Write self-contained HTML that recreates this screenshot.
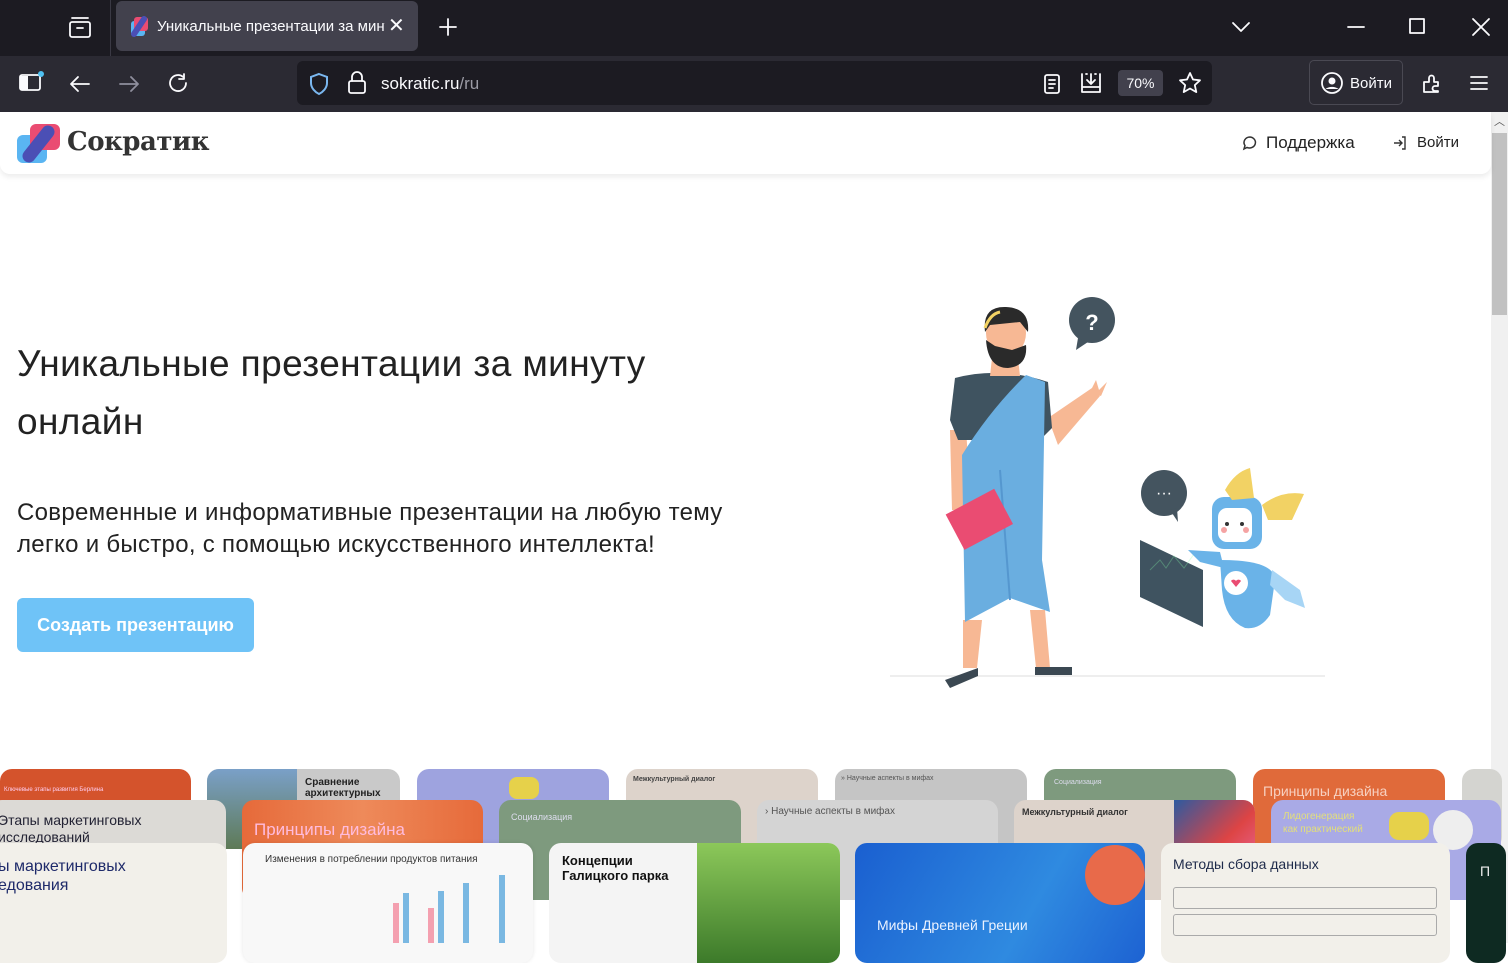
<!DOCTYPE html>
<html><head><meta charset="utf-8"><style>
*{margin:0;padding:0;box-sizing:border-box}
body{width:1508px;height:943px;overflow:hidden;background:#fff;font-family:"Liberation Sans","Noto Sans CJK SC",sans-serif;position:relative}
.a{position:absolute}
.w{color:#fbfbfe}
.card{position:absolute;border-radius:12px;overflow:hidden}
.ic{stroke:#fbfbfe;fill:none;stroke-width:1.8;stroke-linecap:round;stroke-linejoin:round}
</style></head><body>
<!-- tab strip -->
<div class="a" style="left:0;top:0;width:1508px;height:56px;background:#1c1b22"></div>
<div class="a" style="left:110px;top:0;width:1px;height:56px;background:#3a3944"></div>
<svg class="a" style="left:66px;top:14px" width="28" height="26"><rect class="ic" x="4" y="8" width="20" height="15" rx="2"/><path class="ic" d="M6 4h16M11 14h6"/></svg>
<div class="a" style="left:116px;top:1px;width:302px;height:50px;background:#42414d;border-radius:6px"></div>
<svg class="a" style="left:127px;top:15px" width="24" height="24"><rect x="4" y="6" width="14" height="15" rx="3" fill="#5ab5f2"/><rect x="7" y="2" width="14" height="14" rx="3" fill="#ea4c72"/><path d="M7 19L17 4" stroke="#4b4fb5" stroke-width="6" stroke-linecap="round"/></svg>
<div class="a w" style="left:157px;top:18px;font-size:15px;width:228px;white-space:nowrap;overflow:hidden">Уникальные презентации за минуту</div>
<div class="a w" style="left:388px;top:13px;font-size:20px">✕</div>
<svg class="a" style="left:436px;top:15px" width="24" height="24"><path class="ic" d="M12 4v16M4 12h16"/></svg>
<svg class="a" style="left:1229px;top:15px" width="24" height="24"><path class="ic" d="M4 8l8 8 8-8"/></svg>
<svg class="a" style="left:1344px;top:15px" width="24" height="24"><path class="ic" d="M4 12h16"/></svg>
<svg class="a" style="left:1405px;top:14px" width="24" height="24"><rect class="ic" x="5" y="5" width="14" height="14"/></svg>
<svg class="a" style="left:1469px;top:15px" width="24" height="24"><path class="ic" d="M4 4l16 16M20 4L4 20"/></svg>
<!-- toolbar -->
<div class="a" style="left:0;top:56px;width:1508px;height:56px;background:#2b2a33"></div>
<svg class="a" style="left:16px;top:68px" width="32" height="30"><rect class="ic" x="4" y="7" width="20" height="15" rx="2" stroke-width="2.2"/><path d="M4 8h8v14H4z" fill="#fbfbfe"/><circle cx="25" cy="6" r="3" fill="#4fc1f2"/></svg>
<svg class="a" style="left:67px;top:71px" width="26" height="26"><path class="ic" d="M22 13H4M11 6l-7 7 7 7"/></svg>
<svg class="a" style="left:116px;top:71px" width="26" height="26"><path class="ic" style="stroke:#8f8f9d" d="M4 13h18M15 6l7 7-7 7"/></svg>
<svg class="a" style="left:166px;top:71px" width="26" height="26"><path class="ic" d="M20 12a8 8 0 1 1-3-6.2M18 3v5h-5"/></svg>
<div class="a" style="left:297px;top:61px;width:915px;height:44px;background:#1c1b22;border-radius:6px"></div>
<svg class="a" style="left:306px;top:71px" width="26" height="26"><path d="M13 3l8 3v6c0 5-4 9-8 11-4-2-8-6-8-11V6z" fill="none" stroke="#7ab7ef" stroke-width="2"/></svg>
<svg class="a" style="left:345px;top:70px" width="24" height="26"><rect class="ic" x="4" y="11" width="16" height="12" rx="2"/><path class="ic" d="M7 11V7a5 5 0 0 1 10 0v4"/></svg>
<div class="a" style="left:381px;top:74px;font-size:17px;color:#fbfbfe">sokratic.ru<span style="color:#9b9ba5">/ru</span></div>
<svg class="a" style="left:1040px;top:71px" width="24" height="26"><rect class="ic" x="5" y="4" width="14" height="18" rx="2"/><path class="ic" d="M9 9h6M9 13h6M9 17h4"/></svg>
<svg class="a" style="left:1078px;top:70px" width="26" height="26"><path class="ic" d="M4 4v18h18V4M9 4h-1M18 4h-1M13 4v10M9 10l4 4 4-4M4 17h18"/></svg>
<div class="a" style="left:1118px;top:70px;width:45px;height:26px;background:#42414d;border-radius:4px;color:#fbfbfe;font-size:14px;text-align:center;line-height:26px">70%</div>
<svg class="a" style="left:1177px;top:70px" width="26" height="26"><path class="ic" d="M13 3l3 6.5 7 .8-5.2 4.8 1.5 7-6.3-3.6-6.3 3.6 1.5-7L3 10.3l7-.8z"/></svg>
<div class="a" style="left:1309px;top:60px;width:94px;height:45px;border:1px solid #4a4953;border-radius:5px"></div>
<svg class="a" style="left:1319px;top:70px" width="26" height="26"><circle class="ic" cx="13" cy="13" r="10" stroke-width="2"/><circle cx="13" cy="11" r="3.5" fill="#fbfbfe"/><path d="M6.5 19a8 5 0 0 1 13 0" fill="#fbfbfe"/></svg>
<div class="a w" style="left:1350px;top:75px;font-size:15px">Войти</div>
<svg class="a" style="left:1418px;top:70px" width="26" height="26"><path class="ic" d="M6 22V12h5V8a2.5 2.5 0 0 1 5 0v4h4v4h-3a2.5 2.5 0 0 0 0 5h3v1z"/></svg>
<svg class="a" style="left:1467px;top:71px" width="24" height="24"><path class="ic" d="M4 6h16M4 12h16M4 18h16"/></svg>
<!-- scrollbar -->
<div class="a" style="left:1491px;top:112px;width:17px;height:831px;background:#f0f0f0"></div>
<div class="a" style="left:1492px;top:133px;width:15px;height:182px;background:#c1c1c1"></div>
<div class="a" style="left:1494px;top:113px;font-size:11px;color:#555">︿</div>
<div class="a" style="left:1494px;top:924px;font-size:11px;color:#555">﹀</div>
<!-- header -->
<div class="a" style="left:0;top:112px;width:1491px;height:62px;background:#fff;box-shadow:0 3px 6px rgba(0,0,0,.08);border-radius:0 0 10px 10px"></div>
<svg class="a" style="left:16px;top:123px" width="46" height="42"><rect x="1" y="12" width="30" height="28" rx="6" fill="#5ab5f2"/><rect x="14" y="1" width="30" height="26" rx="6" fill="#ea4c72"/><path d="M13 33L32 9" stroke="#4b4fb5" stroke-width="13" stroke-linecap="round"/></svg>
<div class="a" style="left:67px;top:127px;font-family:'DejaVu Serif',serif;font-weight:bold;font-size:26px;color:#333;letter-spacing:-0.5px">Сократик</div>
<svg class="a" style="left:1242px;top:135px" width="16" height="16"><path d="M8 2a6 5.5 0 1 1-3 10.5L2 14l1-3.5A6 5.5 0 0 1 8 2z" fill="none" stroke="#333" stroke-width="1.5"/></svg>
<div class="a" style="left:1266px;top:133px;font-size:17px;color:#222">Поддержка</div>
<svg class="a" style="left:1392px;top:135px" width="16" height="16"><path d="M2 8h8M7 5l3 3-3 3M10 2h3v12h-3" fill="none" stroke="#333" stroke-width="1.4"/></svg>
<div class="a" style="left:1417px;top:134px;font-size:15px;color:#222">Войти</div>
<!-- hero -->
<div class="a" style="left:17px;top:335px;font-size:37px;line-height:58px;color:#222;width:700px;letter-spacing:0.4px">Уникальные презентации за минуту онлайн</div>
<div class="a" style="left:17px;top:497px;font-size:24px;line-height:32px;color:#222;width:760px;letter-spacing:0.3px">Современные и информативные презентации на любую тему легко и быстро, с помощью искусственного интеллекта!</div>
<div class="a" style="left:17px;top:598px;width:237px;height:54px;background:#6fc3f7;border-radius:6px;color:#fff;font-size:18px;font-weight:bold;text-align:center;line-height:54px">Создать презентацию</div>
<!-- illustration -->
<svg class="a" style="left:0;top:0" width="1491" height="760">
<line x1="890" y1="676" x2="1325" y2="676" stroke="#eee" stroke-width="2"/>
<circle cx="1092" cy="320" r="23" fill="#44545f"/><path d="M1078 338l-2 12 12-8z" fill="#44545f"/>
<text x="1092" y="330" font-size="22" font-weight="bold" fill="#fff" text-anchor="middle" font-family="Liberation Sans">?</text>
<circle cx="1164" cy="493" r="23" fill="#44545f"/><path d="M1170 510l8 12-1-14z" fill="#44545f"/>
<text x="1164" y="498" font-size="16" fill="#fff" text-anchor="middle" font-family="Liberation Sans">···</text>
<!-- man -->
<path d="M1048 418 L1092 388 L1100 396 L1058 445z" fill="#f7b894"/>
<path d="M1090 392l6-12 3 10 8-8-6 14z" fill="#f7b894"/>
<path d="M950 430 L952 510 L972 512 L966 430z" fill="#f7b894"/>
<path d="M963 620 L963 668 L977 668 L982 620z M1030 610 L1036 668 L1050 668 L1045 610z" fill="#f7b894"/>
<path d="M945 680 L978 668 L978 676 L950 688z M1035 667 L1072 667 L1072 675 L1035 675z" fill="#3b4852"/>
<path d="M955 378 Q1000 366 1048 382 L1052 428 L1040 440 L958 440 L950 420z" fill="#3f5360"/>
<path d="M1026 375 L1045 382 L1042 560 L1050 612 L1010 598 L965 622 L962 455 Q990 410 1026 375z" fill="#6aaee0"/>
<path d="M1000 470 L1010 600" stroke="#5597cf" stroke-width="2"/>
<path d="M992 358 L1018 358 L1020 376 L990 376z" fill="#f7b894"/>
<ellipse cx="1006" cy="333" rx="20" ry="24" fill="#f7b894"/>
<path d="M985 332 Q982 306 1006 307 Q1030 308 1028 332 L1020 322 L990 325z" fill="#2a2a2a"/>
<path d="M986 340 Q988 368 1008 368 Q1028 366 1026 345 L1012 350 L995 346z" fill="#2a2a2a"/>
<path d="M985 328 Q990 314 1000 312" stroke="#f2d264" stroke-width="3" fill="none"/>
<g transform="rotate(-28 978 520)"><rect x="952" y="500" width="55" height="40" fill="#ea4c72"/></g>
<!-- robot -->
<path d="M1140 540 L1203 570 L1203 627 L1140 597z" fill="#3f5360"/>
<path d="M1150 570 l10 -10 6 8 8 -12 10 12 10 -14" stroke="#8fa" stroke-opacity=".3" fill="none"/>
<path d="M1220 560 Q1275 560 1275 580 L1270 615 Q1260 630 1245 628 Q1225 620 1222 590z" fill="#6ab3e8"/>
<circle cx="1236" cy="583" r="12" fill="#fff"/><path d="M1231 581a3 3 0 0 1 5 0 3 3 0 0 1 5 0l-5 6z" fill="#ea4c72"/>
<path d="M1272 570 L1300 590 L1305 608 L1285 600 L1270 585z" fill="#a7d5f5"/>
<path d="M1188 550 L1220 552 L1224 568 L1200 562z" fill="#6ab3e8"/>
<rect x="1212" y="497" width="50" height="52" rx="12" fill="#6ab3e8"/>
<rect x="1218" y="508" width="34" height="34" rx="9" fill="#fff"/>
<circle cx="1224" cy="530" r="3" fill="#f5a3a3"/><circle cx="1246" cy="530" r="3" fill="#f5a3a3"/>
<circle cx="1227" cy="524" r="2" fill="#333"/><circle cx="1242" cy="524" r="2" fill="#333"/>
<path d="M1225 490 Q1235 472 1250 468 L1254 498 L1232 500z M1262 505 Q1282 490 1304 494 L1292 520 L1268 520z" fill="#f2d264"/>
</svg>
<!-- cards row1 -->
<div class="card" style="left:0;top:769px;width:191px;height:80px;background:#d4532c"><div style="color:#fce;font-size:6px;padding:18px 4px">Ключевые этапы развития Берлина</div></div>
<div class="card" style="left:207px;top:769px;width:193px;height:80px;background:#c9c9c9"><div style="position:absolute;left:0;top:0;width:90px;height:80px;background:linear-gradient(#7aa0c8,#5e7a56)"></div><div style="position:absolute;left:98px;top:8px;font-size:10px;font-weight:bold;color:#222;line-height:11px">Сравнение<br>архитектурных</div></div>
<div class="card" style="left:417px;top:769px;width:192px;height:80px;background:#9ea3df"><div style="position:absolute;left:92px;top:8px;width:30px;height:22px;background:#e6d14a;border-radius:8px"></div></div>
<div class="card" style="left:626px;top:769px;width:192px;height:80px;background:#ddd3cb"><div style="font-size:7px;font-weight:bold;padding:7px;color:#444">Межкультурный диалог</div></div>
<div class="card" style="left:835px;top:769px;width:192px;height:80px;background:#c5c5c5"><div style="font-size:7px;padding:6px;color:#555">» Научные аспекты в мифах</div></div>
<div class="card" style="left:1044px;top:769px;width:192px;height:80px;background:#7e9a7e"><div style="font-size:7px;padding:10px;color:#dde">Социализация</div></div>
<div class="card" style="left:1253px;top:769px;width:192px;height:80px;background:#e06a3a"><div style="font-size:14px;padding:14px 10px;color:#f7d0c0">Принципы дизайна</div></div>
<div class="card" style="left:1462px;top:769px;width:40px;height:80px;background:#d4d4d0"></div>
<!-- row2 -->
<div class="card" style="left:-10px;top:800px;width:236px;height:100px;background:#dcdad6"><div style="font-size:14px;color:#223;padding:12px 8px;line-height:17px">Этапы маркетинговых исследований</div></div>
<div class="card" style="left:242px;top:800px;width:241px;height:100px;background:linear-gradient(90deg,#e66a3a,#ee8a5a,#e66a3a)"><div style="font-size:17px;color:#fbd;padding:20px 12px">Принципы дизайна</div></div>
<div class="card" style="left:499px;top:800px;width:242px;height:100px;background:#7e9a7e"><div style="font-size:9px;color:#dde;padding:12px 12px">Социализация</div></div>
<div class="card" style="left:757px;top:800px;width:241px;height:100px;background:#d4d4d4"><div style="font-size:10px;color:#555;padding:6px 8px">› Научные аспекты в мифах</div></div>
<div class="card" style="left:1014px;top:800px;width:241px;height:100px;background:#ddd3cb"><div style="font-size:9px;font-weight:bold;color:#333;padding:7px 8px">Межкультурный диалог</div><div style="position:absolute;left:160px;top:0;width:81px;height:100px;background:linear-gradient(135deg,#2d5aa0,#d44,#e7b)"></div></div>
<div class="card" style="left:1271px;top:800px;width:230px;height:100px;background:#a9aae6"><div style="font-size:10px;color:#e3df7a;padding:10px 12px;line-height:13px">Лидогенерация<br>как практический</div><div style="position:absolute;left:118px;top:12px;width:40px;height:28px;background:#e6d14a;border-radius:10px"></div><div style="position:absolute;left:162px;top:10px;width:40px;height:40px;background:#eee;border-radius:50%"></div></div>
<!-- row3 -->
<div class="card" style="left:-60px;top:843px;width:287px;height:120px;background:#f2f0ea"><div style="font-size:16px;color:#1e2a6a;padding:14px 58px;line-height:19px">ы маркетинговых<br>едования</div></div>
<div class="card" style="left:243px;top:843px;width:290px;height:120px;background:#f8f8f8;box-shadow:0 0 4px rgba(0,0,0,.1)"><div style="font-size:10px;color:#333;padding:11px 22px">Изменения в потреблении продуктов питания</div>
<div style="position:absolute;left:150px;top:60px;width:6px;height:40px;background:#f4a0b0"></div><div style="position:absolute;left:160px;top:50px;width:6px;height:50px;background:#7ab8e2"></div><div style="position:absolute;left:185px;top:65px;width:6px;height:35px;background:#f4a0b0"></div><div style="position:absolute;left:195px;top:48px;width:6px;height:52px;background:#7ab8e2"></div><div style="position:absolute;left:220px;top:40px;width:6px;height:60px;background:#7ab8e2"></div><div style="position:absolute;left:256px;top:32px;width:6px;height:68px;background:#7ab8e2"></div></div>
<div class="card" style="left:549px;top:843px;width:291px;height:120px;background:#f4f4f4"><div style="font-size:13px;font-weight:bold;color:#111;padding:10px 13px;line-height:15px">Концепции<br>Галицкого парка</div><div style="position:absolute;left:148px;top:0;width:143px;height:120px;background:linear-gradient(#8cc85a,#3c7a2a)"></div></div>
<div class="card" style="left:855px;top:843px;width:290px;height:120px;background:linear-gradient(120deg,#1a5fd0,#2f8ae0 60%,#1d62d2)"><div style="position:absolute;left:230px;top:2px;width:60px;height:60px;border-radius:50%;background:#e86a4a"></div><div style="font-size:14px;color:#eaf2ff;position:absolute;left:22px;top:74px">Мифы Древней Греции</div></div>
<div class="card" style="left:1161px;top:843px;width:289px;height:120px;background:#f2f0ea"><div style="font-size:14px;color:#1e2a4a;padding:13px 12px">Методы сбора данных</div><div style="position:absolute;left:12px;top:44px;width:264px;height:22px;border:1px solid #aaa;border-radius:3px"></div><div style="position:absolute;left:12px;top:71px;width:264px;height:22px;border:1px solid #aaa;border-radius:3px"></div></div>
<div class="card" style="left:1466px;top:843px;width:40px;height:120px;background:#0e2a22"><div style="color:#eee;font-size:14px;padding:20px 14px">П</div></div>
</body></html>
